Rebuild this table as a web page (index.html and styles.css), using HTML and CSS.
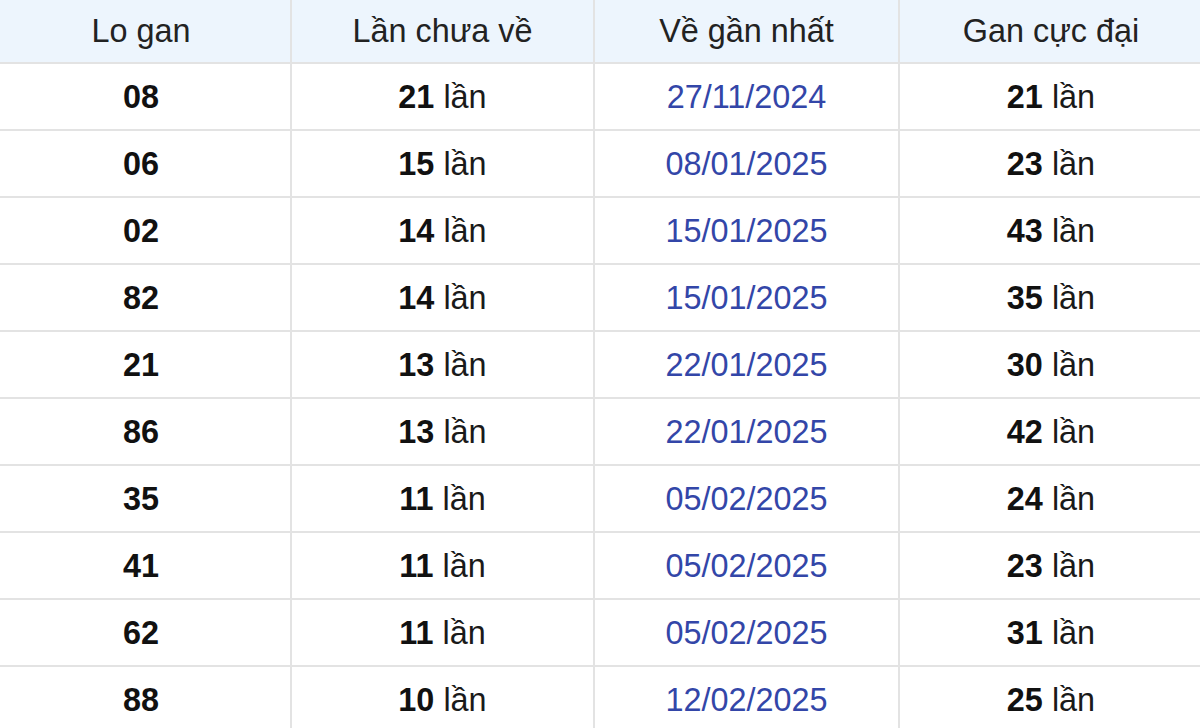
FILE: index.html
```html
<!DOCTYPE html>
<html lang="vi">
<head>
<meta charset="utf-8">
<title>Lo gan</title>
<link rel="stylesheet" href="styles.css">
</head>
<body>
<table class="gan">
  <colgroup>
    <col class="c1"><col class="c2"><col class="c3"><col class="c4">
  </colgroup>
  <thead>
    <tr><th>Lo gan</th><th>Lần chưa về</th><th>Về gần nhất</th><th>Gan cực đại</th></tr>
  </thead>
  <tbody>
    <tr><td><b>08</b></td><td><b>21</b> lần</td><td class="date">27/11/2024</td><td><b>21</b> lần</td></tr>
    <tr><td><b>06</b></td><td><b>15</b> lần</td><td class="date">08/01/2025</td><td><b>23</b> lần</td></tr>
    <tr><td><b>02</b></td><td><b>14</b> lần</td><td class="date">15/01/2025</td><td><b>43</b> lần</td></tr>
    <tr><td><b>82</b></td><td><b>14</b> lần</td><td class="date">15/01/2025</td><td><b>35</b> lần</td></tr>
    <tr><td><b>21</b></td><td><b>13</b> lần</td><td class="date">22/01/2025</td><td><b>30</b> lần</td></tr>
    <tr><td><b>86</b></td><td><b>13</b> lần</td><td class="date">22/01/2025</td><td><b>42</b> lần</td></tr>
    <tr><td><b>35</b></td><td><b>11</b> lần</td><td class="date">05/02/2025</td><td><b>24</b> lần</td></tr>
    <tr><td><b>41</b></td><td><b>11</b> lần</td><td class="date">05/02/2025</td><td><b>23</b> lần</td></tr>
    <tr><td><b>62</b></td><td><b>11</b> lần</td><td class="date">05/02/2025</td><td><b>31</b> lần</td></tr>
    <tr><td><b>88</b></td><td><b>10</b> lần</td><td class="date">12/02/2025</td><td><b>25</b> lần</td></tr>
  </tbody>
</table>
</body>
</html>
```
FILE: styles.css
```css
html, body {
  margin: 0;
  padding: 0;
  background: #ffffff;
  overflow: hidden;
}
body {
  font-family: "Liberation Sans", Arial, sans-serif;
  color: #1a1a1a;
}
.gan {
  border-collapse: collapse;
  table-layout: fixed;
  width: 1212px;
  margin-left: -10px;
  margin-top: -3px;
  font-size: 32.4px;
}
.c1 { width: 300px; }
.c2 { width: 303px; }
.c3 { width: 305px; }
.c4 { width: 304px; }
.gan th, .gan td {
  border: 2px solid #e3e3e3;
  text-align: center;
  padding: 2px 0 0;
}
.gan th {
  height: 61px;
  background: #edf5fd;
  font-weight: normal;
  color: #222;
}
.gan td {
  height: 63px;
  color: #1a1a1a;
}
.gan td b {
  font-weight: bold;
  color: #111;
}
.gan td.date {
  color: #3346a8;
}
```
